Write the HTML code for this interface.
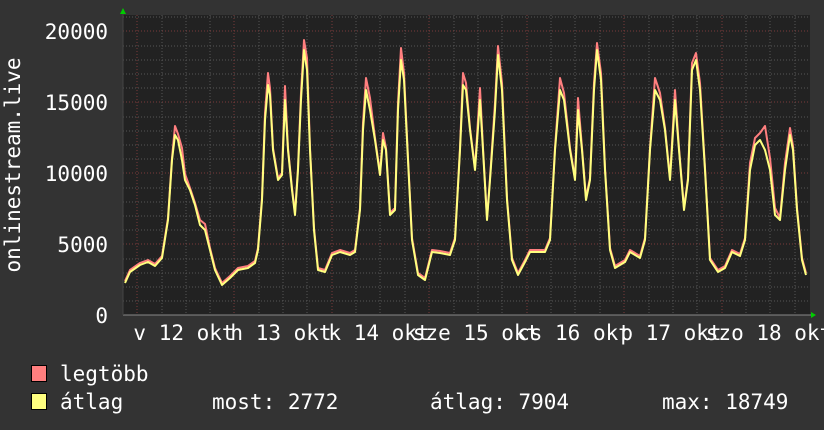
<!DOCTYPE html>
<html><head><meta charset="utf-8"><style>
html,body{margin:0;padding:0;background:#333;}
svg{display:block}
text{font-family:"DejaVu Sans Mono","Liberation Mono",monospace;font-size:21px;fill:#fff}
</style></head><body>
<svg width="824" height="430" viewBox="0 0 824 430" xmlns="http://www.w3.org/2000/svg">
<rect width="824" height="430" fill="#333"/>
<rect x="123" y="15" width="687" height="300" fill="#222"/>
<g stroke="#555" stroke-width="1" stroke-dasharray="1,2">
<path d="M123 301H810M123 287H810M123 273H810M123 259H810M123 230H810M123 216H810M123 202H810M123 188H810M123 159H810M123 145H810M123 131H810M123 117H810M123 88H810M123 74H810M123 60H810M123 46H810M123 17H810"/>
<path d="M162 15V315M186 15V315M210 15V315M259 15V315M283 15V315M307 15V315M356 15V315M380 15V315M405 15V315M454 15V315M478 15V315M502 15V315M551 15V315M575 15V315M600 15V315M649 15V315M673 15V315M697 15V315M746 15V315M770 15V315M795 15V315"/>
</g>
<g stroke="#7a3a3a" stroke-width="1" stroke-dasharray="1,2">
<path d="M123 244H810M123 173H810M123 102H810M123 31H810"/>
<path d="M137 15V315M234 15V315M332 15V315M429 15V315M527 15V315M624 15V315M722 15V315"/>
</g>
<path d="M123 315H812" stroke="#888" stroke-width="1"/>
<path d="M123 14V315" stroke="#444" stroke-width="1"/>
<polygon points="120,14 126,14 123,8" fill="#0c0"/>
<polygon points="811,312 811,318 816,315" fill="#0c0"/>
<g fill="none" stroke-linejoin="round" stroke-width="2">
<polyline transform="translate(0,-2)" stroke="#ff7f7f" points="125,283 130,272 140,265 148,262 155,266 162,258 168,220 172,160 175,128 178,136 182,150 185,176 190,190 195,205 200,222 205,226 210,250 215,270 222,285 230,278 238,270 248,268 255,263 258,250 262,200 265,115 268,75 270,90 273,150 278,180 282,175 285,88 288,150 292,190 295,215 298,170 301,95 304,42 307,60 310,150 314,230 318,270 325,272 332,255 340,252 350,255 355,252 360,210 363,125 366,80 370,100 375,140 380,175 383,135 386,150 390,215 395,210 398,105 401,50 404,75 408,160 412,240 418,275 425,280 432,252 440,253 450,255 455,240 460,150 463,75 466,85 470,130 475,170 480,90 483,150 487,220 490,180 495,105 498,48 502,85 507,200 512,260 518,275 525,262 530,252 545,252 550,240 555,150 560,80 564,95 570,150 575,180 578,100 582,150 586,200 590,180 594,85 597,45 601,75 605,170 610,250 615,268 625,262 630,252 640,258 645,240 650,150 655,80 660,95 665,130 670,180 675,92 679,150 684,210 688,180 692,65 696,55 700,85 705,170 710,260 718,272 725,268 732,252 740,256 745,240 750,165 755,140 760,135 765,128 770,160 775,210 780,220 785,165 790,130 793,148 797,210 802,260 806,275"/>
<polyline stroke="#ffff7f" points="125,283 130,272 140,265 148,262 155,266 162,258 168,220 172,160 175,135 178,140 182,160 185,180 190,190 195,205 200,225 205,230 210,250 215,270 222,285 230,278 238,270 248,268 255,263 258,250 262,200 265,120 268,85 270,95 273,150 278,180 282,175 285,100 288,150 292,190 295,215 298,170 301,100 304,50 307,70 310,150 314,230 318,270 325,272 332,255 340,252 350,255 355,252 360,210 363,130 366,90 370,110 375,140 380,175 383,140 386,150 390,215 395,210 398,110 401,60 404,80 408,160 412,240 418,275 425,280 432,252 440,253 450,255 455,240 460,150 463,85 466,90 470,130 475,170 480,100 483,150 487,220 490,180 495,110 498,55 502,90 507,200 512,260 518,275 525,262 530,252 545,252 550,240 555,150 560,90 564,100 570,150 575,180 578,110 582,150 586,200 590,180 594,90 597,50 601,80 605,170 610,250 615,268 625,262 630,252 640,258 645,240 650,150 655,90 660,100 665,130 670,180 675,100 679,150 684,210 688,180 692,70 696,60 700,90 705,170 710,260 718,272 725,268 732,252 740,256 745,240 750,170 755,145 760,140 765,150 770,170 775,215 780,220 785,170 790,135 793,150 797,210 802,260 806,275"/>
</g>
<g text-anchor="end">
<text x="108" y="39">20000</text>
<text x="108" y="110">15000</text>
<text x="108" y="181">10000</text>
<text x="108" y="252">5000</text>
<text x="108" y="323">0</text>
</g>
<text transform="translate(20,165) rotate(-90)" text-anchor="middle">onlinestream.live</text>
<g text-anchor="middle">
<text x="184" y="340">v 12 okt</text>
<text x="281" y="340">h 13 okt</text>
<text x="379" y="340">k 14 okt</text>
<text x="476" y="340">sze 15 okt</text>
<text x="574" y="340">cs 16 okt</text>
<text x="671" y="340">p 17 okt</text>
<text x="769" y="340">szo 18 okt</text>
</g>
<rect x="31.5" y="365.5" width="15" height="16" fill="#ff7f7f" stroke="#000"/>
<rect x="31.5" y="393.5" width="15" height="16" fill="#ffff7f" stroke="#000"/>
<text x="60" y="381">legtöbb</text>
<text x="60" y="409">átlag</text>
<text x="212" y="409">most: 2772</text>
<text x="430" y="409">átlag: 7904</text>
<text x="662" y="409">max: 18749</text>
</svg>
</body></html>
